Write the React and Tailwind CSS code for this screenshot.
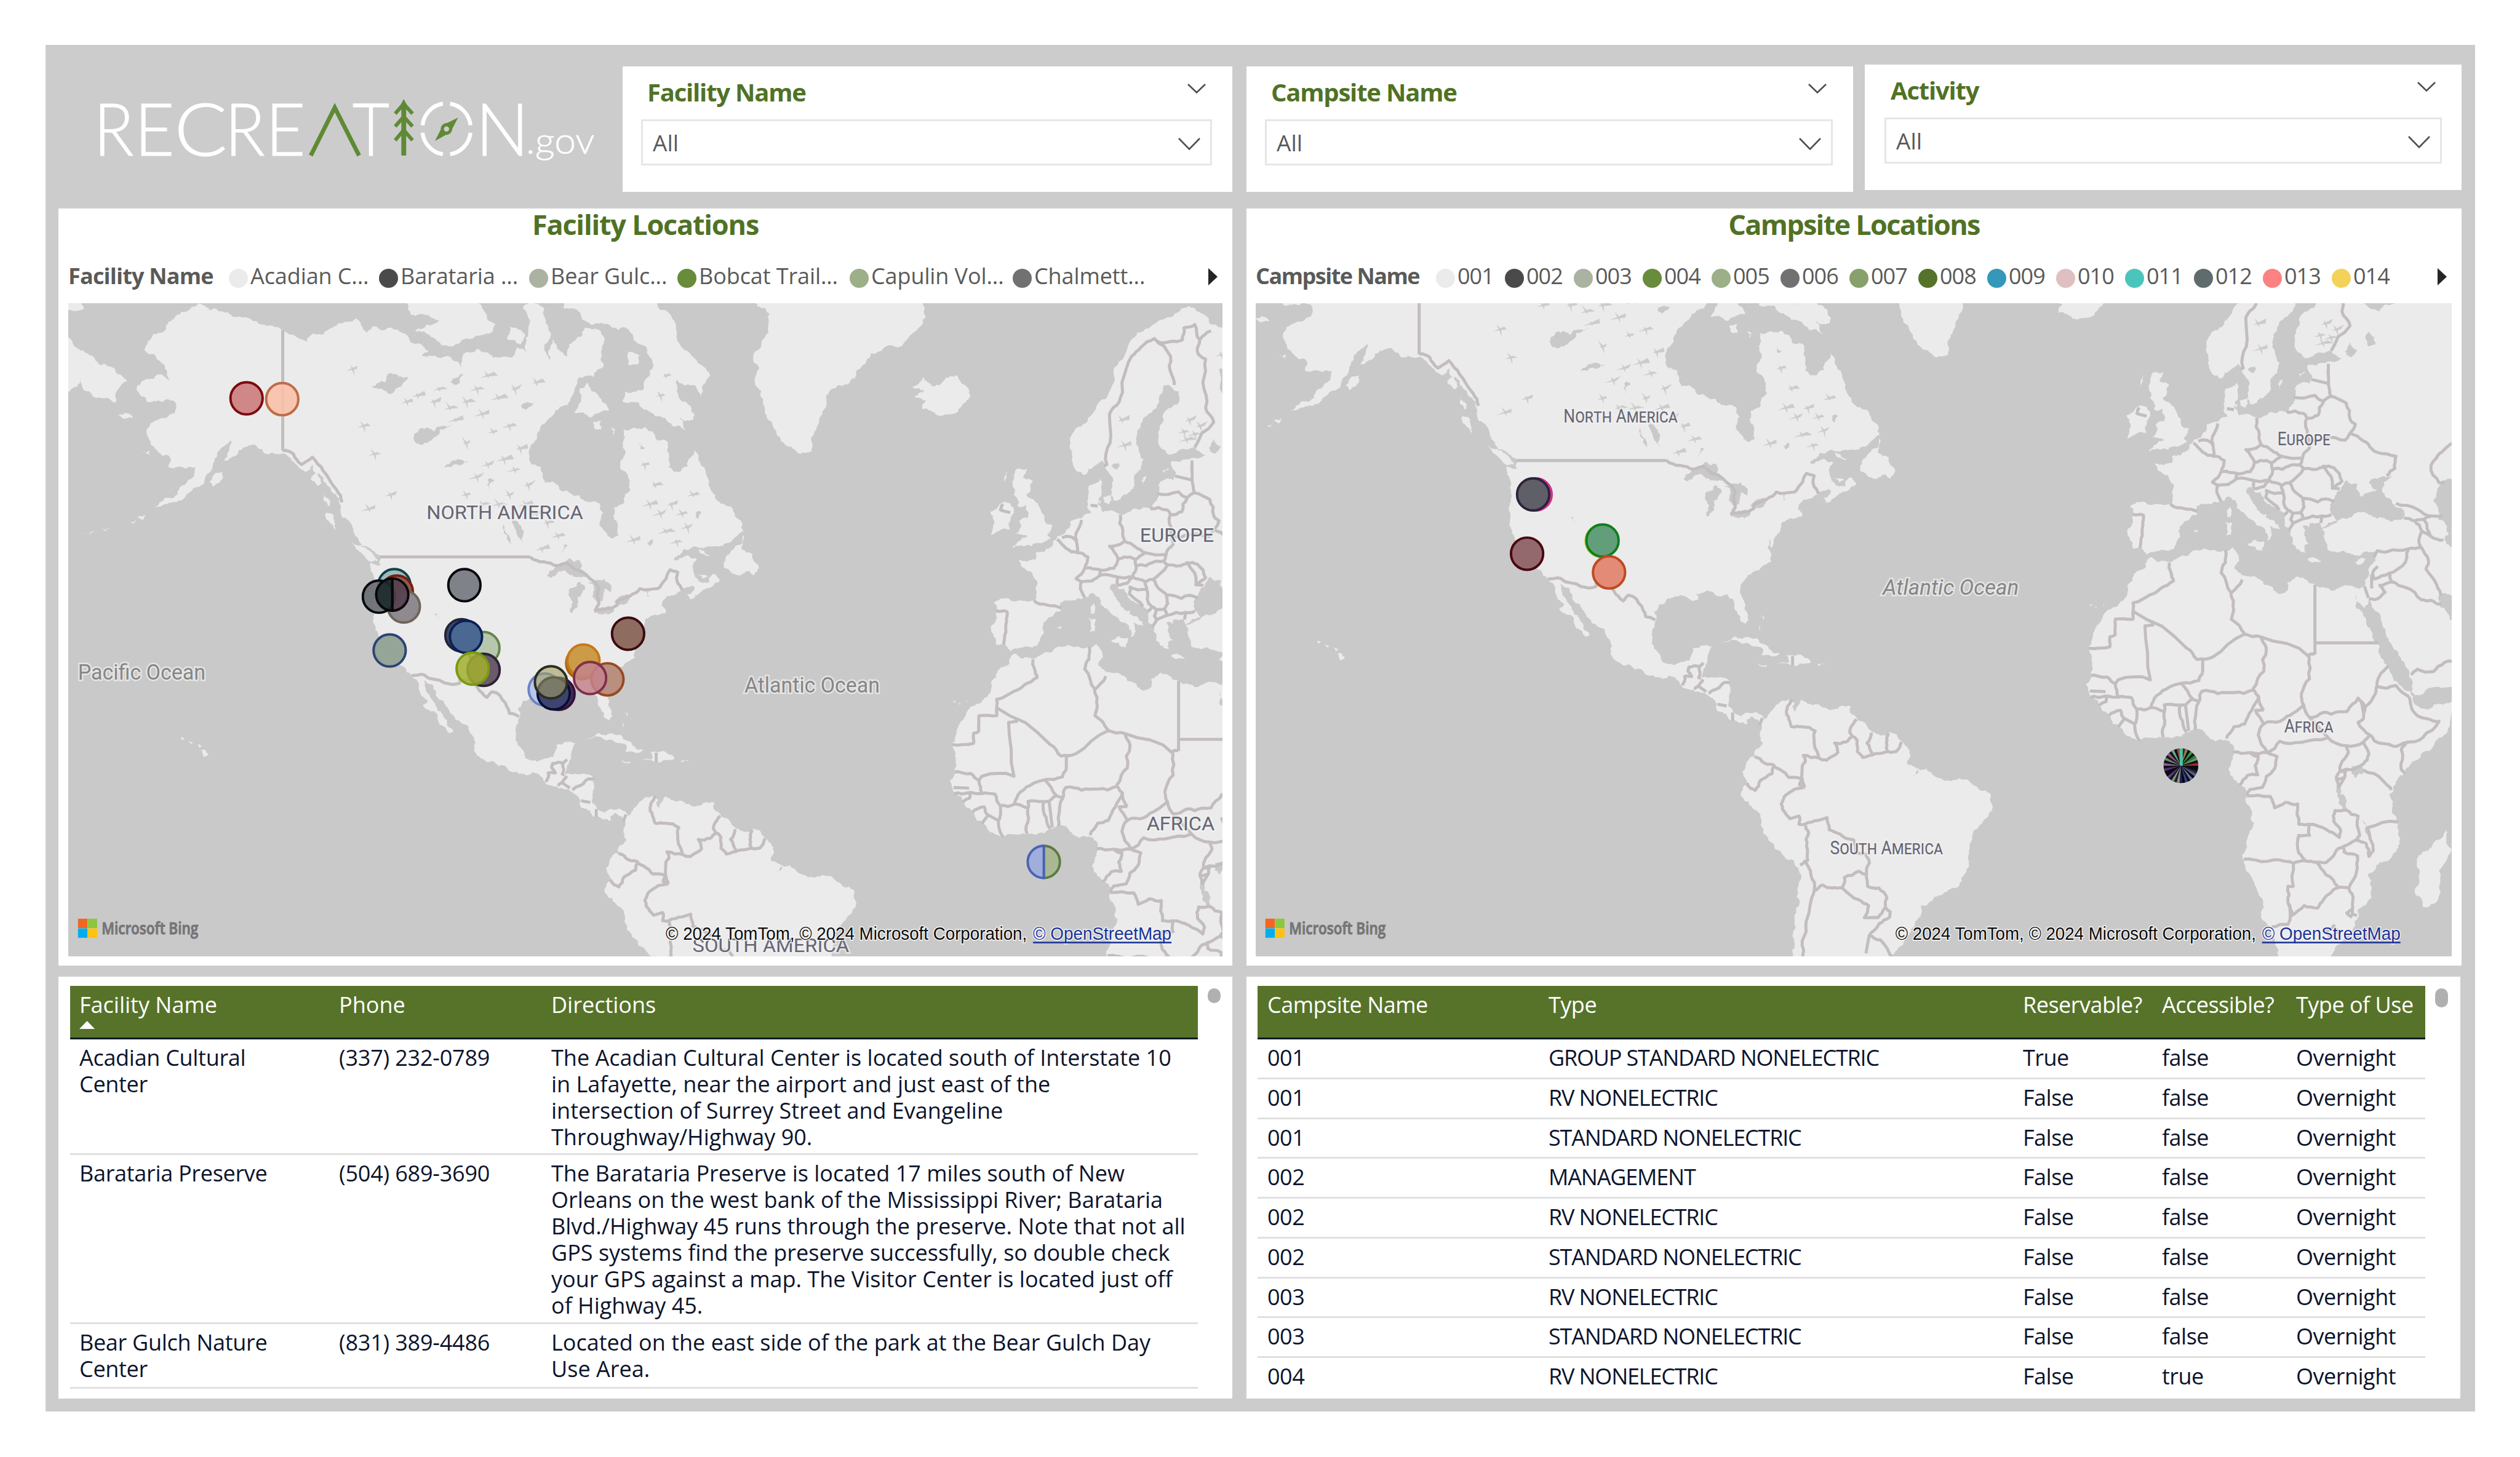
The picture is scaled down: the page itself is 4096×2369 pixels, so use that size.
import React from "react";

/* ---------- Web-Mercator helpers: 3200 units for the full 360 degrees ---------- */
const UNIT = 3200 / 360;
const project = ([lon, lat]) => [
  lon * UNIT,
  -Math.log(Math.tan(Math.PI / 4 + (lat * Math.PI) / 360)) * (180 / Math.PI) * UNIT,
];
const parse = (s) => s.trim().split(/\s+/).map((p) => p.split(",").map(Number));

/* Deterministic midpoint displacement gives the coasts a natural edge. */
const noise = (x, y) => {
  const n = Math.sin(x * 12.9898 + y * 78.233) * 43758.5453;
  return (n - Math.floor(n)) * 2 - 1;
};
const roughen = (pts, amount, depth) => {
  if (depth === 0) return pts;
  const out = [pts[0]];
  for (let i = 1; i < pts.length; i++) {
    const [ax, ay] = pts[i - 1];
    const [bx, by] = pts[i];
    const k = noise(ax + bx, ay + by) * amount;
    out.push([(ax + bx) / 2 - (by - ay) * k, (ay + by) / 2 + (bx - ax) * k], [bx, by]);
  }
  return roughen(out, amount, depth - 1);
};
const toPath = (s, closed, amount = 0.2, depth = 3) => {
  let pts = parse(s).map(project);
  if (closed) pts.push(pts[0]);
  pts = roughen(pts, amount, depth);
  return "M" + pts.map(([x, y]) => x.toFixed(1) + " " + y.toFixed(1)).join("L") + (closed ? "Z" : "");
};

const LAND = [
  // North America
  "-168,65.7 -166.5,66.2 -164,66.6 -161.8,66.1 -162.5,66.9 -164,67.6 -166.6,68.3 -166,68.9 -163.2,69.5 -161.5,70.3 -159,70.8 -156.6,71.3 -154.5,70.9 -152,70.8 -149,70.5 -145,70 -141,69.65 -138.5,69.2 -136.5,68.9 -135,69.4 -133,69.6 -130.5,70.1 -128.5,70.2 -127.5,70.4 -125.5,69.5 -124.3,69.9 -121.5,69.8 -117.5,69 -115,68.6 -114,68.2 -115.2,67.9 -112,67.8 -109.8,67.8 -108,67.1 -107.5,68.1 -105,68.4 -102,67.8 -98.5,67.8 -97.5,68.5 -95.9,68.2 -95.5,69.4 -96.5,71 -95,71.9 -92.5,71 -91.8,69.8 -90.3,68.7 -88.3,67.9 -88,68.7 -85.5,69.3 -85,69.8 -82.5,69.7 -81.3,69 -82,68.2 -81.5,67.3 -83.5,66.4 -86,66.4 -87,65.3 -88.5,64.2 -90.5,63.8 -92.5,62.7 -94.5,61 -94.8,59 -93.2,58.8 -92.4,57.2 -90,57 -87.5,56.1 -85,55.3 -82.3,55.1 -82.3,53 -81.3,52 -80,51.2 -78.8,51.6 -79,53 -79.6,54.6 -77.7,55.3 -76.6,56.5 -76.7,57.5 -78.5,58.8 -77.5,60 -77.8,61.3 -78.1,62.3 -75.5,62.3 -73.8,62.4 -71.8,61.3 -69.6,61 -69.5,59.5 -69.5,58.8 -67.5,58.3 -66,58.8 -65.2,59.8 -64.6,60.4 -63.8,59.3 -62.5,58 -61.8,56.6 -60.3,55.3 -58,54.8 -57.2,53.7 -55.8,52.9 -55.7,52 -57,51.4 -59.5,50.3 -62,50.3 -65,50.2 -66.7,49.9 -68.5,48.8 -70,47.5 -68.3,48.6 -66,49.2 -64.3,48.8 -65,48 -64.8,47 -64,46.2 -62,45.8 -61.2,46.9 -60,46 -61.5,45.2 -63.5,44.6 -65.5,43.5 -66.1,44.2 -64.7,45.2 -66,45.2 -67.2,44.7 -69,44.1 -70.3,43.6 -70.8,42.7 -70,41.8 -71.5,41.4 -73.8,40.9 -74,39.8 -75.1,38.8 -75.9,37.2 -76.1,39 -76.4,37.2 -75.8,36 -75.8,35.2 -77.5,34.4 -79,33.6 -80.8,32.2 -81.4,31 -81.3,29.8 -80.5,28.4 -80.1,26.8 -80.4,25.2 -81.3,25.6 -82,27 -82.7,28 -82.8,29.2 -84,30.1 -85.2,29.7 -86.5,30.4 -88.5,30.3 -89.6,30.2 -89.3,29.2 -91,29.3 -93,29.7 -94.7,29.4 -96.5,28.4 -97.4,27.3 -97.2,25.7 -97.8,24 -97.8,22.4 -97.2,20.8 -96.2,19.2 -94.8,18.3 -92.6,18.6 -91,18.9 -90.5,20 -90.3,21.1 -88,21.6 -86.8,21.4 -87.4,20 -87.7,18.5 -88.3,17.5 -88.8,15.9 -87.5,15.8 -85.8,15.9 -83.5,15.1 -83.3,13.8 -83.6,12.2 -83.7,11 -82.8,9.7 -81.5,8.9 -79.8,9.5 -78,9.3 -77,8.4 -76.8,7.5 -77.5,7.3 -78.3,8.3 -79.5,8.9 -80.3,8.2 -80.3,7.4 -81.6,7.7 -82.9,8.1 -83.7,8.6 -84.8,9.7 -85.8,10 -85.8,11.1 -87.3,12.6 -88.5,13.2 -91,13.8 -92.5,14.6 -94.5,16.2 -96,15.7 -98.5,16.3 -101,17.3 -103.5,18.3 -105.5,20 -105.3,21.5 -106,22.8 -108,24.8 -109.4,26 -110.8,27.6 -112.3,29 -113.2,31 -114.8,31.7 -114.5,30 -112.7,28 -111.3,26.2 -110.5,24.3 -109.5,23.2 -110.2,23 -112,24.6 -112.3,26 -114,27 -115,27.8 -114.1,28.5 -115.8,30.3 -117.1,32.5 -118.4,33.8 -120.6,34.5 -121.9,36.6 -122.5,37.8 -123.8,39.3 -124.3,40.4 -124.1,42 -124.4,43 -124,45 -124,46.3 -124.7,48.3 -122.8,48 -122.8,49 -124.5,49.8 -126.5,50.6 -127.7,51.8 -128.5,53 -130.3,54.5 -130.5,55.6 -132,56.3 -133.5,57.8 -135.5,59 -136.8,58.3 -139.5,59.6 -142,60 -144,60 -146,60.8 -148.3,60.6 -149.8,59.8 -151.8,59.3 -150.5,61.2 -152.5,60.5 -153.8,59.2 -155,58.1 -157,56.8 -159,55.8 -161.5,55.2 -163.5,54.8 -164.9,54.6 -162.5,55.7 -160.5,56 -158,57.6 -157.2,58.7 -159,58.6 -162,58.7 -162,59.8 -164.5,60.4 -166,61.6 -164.8,62.9 -161,63.6 -161,64.5 -163.5,64.5 -166.3,64.6",
  // Siberian tip, Alaskan and Canadian islands
  "-183,69.5 -180,68.9 -178,68.3 -175,67.3 -172,66.9 -169.8,66.1 -172,64.4 -175.5,64.8 -178,65.5 -178.5,66.3 -180.5,65.3 -183,65",
  "-182,71.5 -178.5,71.4 -177.8,71 -182,70.9",
  "-171.7,63.5 -170,63.6 -168.8,63.2 -170.5,63.1",
  "-167,60.2 -165.7,60.3 -165.7,59.9",
  "-154.6,57.3 -153,58.2 -152.1,58.3 -152.5,57.4 -154,56.8",
  "-168,53.6 -166.3,54 -167,53.3",
  "-169.2,53 -168,53.4 -168.6,52.9",
  "-174.6,52.2 -173.2,52.4 -173.8,52",
  "-177.9,51.8 -176,52 -176.8,51.7",
  "-128.2,50.8 -126.5,50.4 -125,49.8 -123.4,48.5 -125.5,48.8 -127.3,49.9",
  "-133,54.1 -131.7,53.9 -131.2,52.2 -132.3,53",
  "-134.5,58.2 -133.8,57.2 -134.4,56.9 -135.8,57.6",
  "-133.4,56.3 -132.2,55.4 -132.4,54.8 -133.4,55.4",
  "-125,72.2 -123,71.3 -120.5,71.6 -118,72.5 -118,74 -125,74",
  "-118,71.4 -117.2,70.6 -114,70.6 -112,70.3 -116.5,69.6 -113.5,69.2 -109,68.7 -105.5,69.2 -102,69.6 -101.5,70 -104,71 -104.8,72.5 -107,73.3 -114,73",
  "-99,69.9 -96,69.3 -97,68.7 -99.3,69",
  "-102,73 -99,71.6 -97,72 -98,73.5",
  "-90,73 -89,71 -87,71 -85.5,70.3 -84,70 -80,69.8 -77.5,69.8 -76,69 -73.5,68.4 -72.5,67.5 -73,66.5 -74.3,65.4 -77.5,65.3 -78,64.5 -75,64.4 -72,63.3 -68.8,62.5 -66.3,62.1 -67.5,63.2 -65,63 -64.7,63.5 -67,64.5 -68,66.2 -65,65.8 -63.5,64.9 -61.8,66.5 -63.5,67.3 -67,68.5 -68,69.5 -71,70.9 -75,72 -78,72.8 -81,73.7",
  "-87,63.6 -84,63.2 -80.5,63.8 -82.5,65 -84.5,66 -86,65.5",
  "-83.5,62.8 -82,62.9 -82,62.2 -83.3,62.3",
  "-77,68.2 -75,68 -75.2,67.3 -77,67.3",
  "-80.2,62.4 -79.4,62.2 -79.8,61.7",
  "-59.3,47.7 -57.8,49.8 -55.6,51.6 -56,50 -54,49.4 -52.8,47.6 -53.7,46.7 -54.5,47.3 -55.8,46.9",
  "-64.4,49.9 -61.8,49.1 -63.5,49.4",
  "-64,46.9 -62.2,46.5 -63.2,46.2",
  // Greenland, Iceland
  "-55,73.5 -54,71.5 -51.5,71 -51,69.5 -53.8,68 -53.5,66 -52,64.5 -51,63 -49.5,61.8 -48,60.9 -45,60 -43,60.2 -42.5,62 -41,63.5 -40.3,65 -38,65.8 -35,66.3 -32,68.1 -27,68.5 -22.5,70 -22,71 -24,72 -22,75",
  "-24.3,65.6 -22.3,66.4 -20.5,65.7 -18.5,66.1 -16,66.5 -14.5,65.8 -13.6,65 -15,64.3 -18.7,63.4 -21,63.8 -22.6,63.9 -21.8,64.6 -24,64.9 -22,65.4",
  // Caribbean, Hawaii
  "-84.9,21.9 -82.5,23.1 -80,23 -77,21.7 -74.2,20.2 -77.6,19.9 -77.2,20.7 -78.5,21.4 -81.8,22.2",
  "-74.4,18.4 -72.5,18.6 -73,19.9 -70,19.8 -68.4,18.6 -71,18 -72.3,18.2",
  "-78.3,18.4 -76.3,18.1 -77.5,17.8",
  "-67.2,18.4 -65.7,18.3 -67,18",
  "-78.3,25.2 -77.8,24.5 -77.9,23.9",
  "-77.8,26.7 -77,26.3 -77.2,25.9",
  "-61.9,10.7 -61,10.7 -61.2,10.1",
  "-156.1,20.2 -154.8,19.5 -155.7,18.9",
  "-156.8,21.1 -156,20.9 -156.4,20.5",
  "-158.4,21.7 -157.6,21.4 -158,21.2",
  "-159.9,22.3 -159.2,22.2 -159.5,21.8",
  // South America
  "-77.3,8 -76.8,8.5 -75.6,10 -74.8,11 -72.2,12 -71.4,11.2 -71.8,10.6 -71.4,9.7 -71,10.6 -70,11.9 -68.3,11 -66,10.5 -64,10.2 -62,10.7 -60.8,9.2 -58.5,7.8 -57,6 -54,5.9 -51.6,4.3 -50,1.8 -50.5,0 -48.5,-0.8 -47,-0.7 -44.3,-2.6 -41.5,-2.9 -39,-3.1 -37,-4.8 -35.3,-5.3 -34.8,-7.5 -35.5,-9.5 -37.2,-11.3 -38.5,-13 -39,-15 -39.1,-17.8 -40,-20 -41,-22 -43.2,-23 -45.5,-23.8 -48,-25.3 -48.6,-27.5 -49.8,-29.5 -51.5,-31.8 -53.5,-34 -57,-35 -57,-38 -74,-38 -73.3,-37 -72,-34 -71.5,-31 -71.4,-28 -70.5,-25 -70.2,-20 -71.5,-17.5 -75,-15.5 -76.3,-13.8 -77.5,-11.5 -79,-8.3 -80,-6.8 -81.2,-6 -81,-4.2 -80.2,-3.3 -80.9,-2 -80.5,-0.5 -79.9,0.9 -78.8,1.6 -77.3,3.8 -77.5,6.6",
  // Europe, Africa, Middle East
  "62,68.5 55,68.5 50,68 46,68 44,68.5 43.5,66.5 40,64.7 37,64 35,64.3 32.5,67 35,66.5 41,66.5 41,67.5 36,69 31,70 28,71 25.5,71 22,70.3 18.5,69.6 15.5,68.4 13,66.5 11.5,64.7 9,63.5 6,62.3 5,61 5.2,59.5 6,58.4 7.5,58 9.5,58.9 10.7,59.4 11.3,58.8 12.5,56.5 12.9,55.5 14.2,55.5 16,56.3 16.7,57.8 18.5,59.5 17.3,60.8 17.3,62 19,63.3 21.5,65 22.3,65.8 25,65.3 25.2,64.8 22,63.3 21.3,61.5 21.8,60.5 24,60 28,60.6 30,59.9 27,59.5 23.5,59.2 24.5,58.3 24.3,57.3 22.6,57.6 21.2,57 21,55.4 19.8,54.5 18.5,54.7 16.5,54.5 14,54 12,54.3 10.9,54.2 10,55 10.8,56.3 10.5,57.6 8.5,57 8.2,55.5 8.8,54 7,53.5 5,53.2 3.8,51.7 1.7,50.9 1.5,50.2 0,49.6 -1.4,49.6 -1.5,48.7 -4.6,48.6 -4.3,47.9 -2.3,47.2 -1.2,46 -1.3,44.5 -1.7,43.4 -4,43.4 -8,43.7 -9.2,43 -8.7,41 -9.4,38.8 -8.8,37.1 -7,37.1 -6.1,36.2 -4.5,36.7 -2,36.8 -0.7,37.7 0.1,38.8 -0.3,39.6 0.8,41 3.2,42 3,43.2 5,43.4 7.5,43.8 8.8,44.4 10.2,43.9 10.6,42.9 12.3,41.8 14,40.8 15.7,40 16,38 16.5,38.4 17.1,39.1 16.7,40.4 18.4,39.9 18.3,40.5 16,41.5 16,42 14.3,42.6 13.4,43.8 12.3,44.9 12.5,45.5 13.7,45.7 13.8,45 15,45 16,43.6 18.5,42.5 19.5,41.8 19.4,40.4 20.8,38.8 21.5,37.2 22.5,36.6 23.2,36.5 23,37.6 24,37.9 23,39.2 22.8,40.4 24,40.2 24,40.8 26,40.8 26.2,40.1 27.5,40.9 29,41.1 28,42 27.8,43.2 28.7,44.4 29.7,45.2 31,46.5 33,46.1 32.6,45.4 33.6,44.4 35.3,45 36.5,45.3 35,46.2 37.5,47 39.2,47.2 37.8,46.3 37.5,45 39,44.1 41.5,42.5 41.5,41.5 39,41 36.5,41.4 35,42 32,41.8 29.3,41.2 29,40.8 26.3,39.9 26.8,38.6 27.3,37 28.5,36.7 30.5,36.7 32.5,36.1 34.5,36.7 36,36.7 35.8,35 35,33 34.2,31.3 32.5,31.1 31,31.5 29,30.9 25,31.6 23,32.6 21.7,32.9 20,32 20,30.8 18,30.3 15.5,31.6 15,32.4 11.5,33.1 10.1,34 11,35.2 10.3,36.8 9.8,37.3 6,36.9 3,36.9 0,35.9 -2,35.1 -5.4,35.9 -6.3,34.5 -8.5,33.3 -9.8,31.4 -9.8,29.8 -11.5,28.2 -13,27.6 -14.5,26 -16,23.8 -17,21.3 -16.3,19.5 -16.5,16.5 -17.4,14.7 -16.7,12.5 -15,11 -13.2,9 -12.5,7.5 -10.5,6 -8,4.5 -6,5 -3,5.1 -1.5,4.9 1.2,6 4.3,6.3 5.5,4.8 6.5,4.3 8.5,4.6 9.6,3.8 9.8,1.5 9.4,-0.3 9,-1 11.5,-4 12.3,-6 13.3,-8.5 13.7,-10.8 12.6,-13 12.2,-15.5 11.8,-17.5 13.5,-21 14.5,-23 15,-26.5 16.5,-28.7 17.5,-30.5 18.3,-32.5 18.4,-34 20,-34.8 24,-34 27,-33.6 30,-31.2 32.5,-28.5 32.9,-26 35.5,-24 35.4,-22 34.8,-20 37,-17.8 40,-16 40.7,-14.5 40.4,-11 39.3,-8.5 39.5,-6.8 38.8,-5.5 39.8,-3.8 41.5,-1.8 43.5,0.7 46,2.5 48.5,5 50,8 51.2,10.5 51,11.8 48,11.2 44.5,10.4 43.2,11.5 43.2,12.5 41.5,13.8 39.6,15.3 38.5,18 37.2,19.5 37,21.2 35.6,23.8 34,26.5 32.6,29.5 32.5,30 33.5,28.5 34.2,27.8 34.9,29.4 35.5,28 37.5,25 39,22 41,19 42.5,17 43,14.5 43.5,12.7 45,12.9 48.5,14 52.3,15.6 55,17.5 62,20",
  "-5.7,50.1 -3.5,50.3 -1,50.7 1.3,51.2 0.7,51.6 1.7,52.7 0.2,53.2 -0.5,54.3 -1.6,55.3 -3.2,56 -2,57.4 -3.8,57.7 -3.1,58.6 -5,58.6 -5.8,57.3 -5.6,56 -4.8,54.8 -3.3,54.9 -3,53.5 -4.5,53.2 -4.3,52.4 -5.2,51.8 -3,51.4 -4.8,50.8",
  "-9.8,51.6 -6.3,52.2 -6,53.7 -5.6,54.6 -7.2,55.3 -8.6,54.6 -9.9,54.2 -9.2,53.2",
  "-7,58.2 -6.3,58.3 -7.3,57.3",
  "12.5,37.9 15.6,38.2 15.2,36.7",
  "8.3,41 9.7,40.8 9.5,39.2 8.5,39",
  "8.7,42.6 9.4,43 9.4,41.6 8.9,41.6",
  "23.6,35.5 26.2,35.2 24.5,35",
  "32.4,35 34.4,35.6 33,34.7",
  "11,55.7 12.5,56 12.2,55 11.2,55.2",
  "9.8,55.5 10.7,55.4 10.4,55",
  "18.2,57.5 19,57.9 18.4,57",
  "22,58.5 23.2,58.6 22.3,58.1",
  "2.5,39.6 3.3,39.9 3.1,39.4",
  "-16.8,28.4 -16.2,28.5 -16.6,28.1",
  "-15.8,28.1 -15.4,28.1 -15.6,27.8",
  "-14.2,28.5 -13.9,28.5 -14.2,28.2",
  "49.3,-12 50.4,-15.5 49.6,-17 48,-22 47,-25 45,-25.5 43.5,-23 44.3,-20 44.3,-16.5 46,-15.8 48,-13.8",
];

const WATER = [
  "-92,46.7 -89.5,48 -88,48.8 -86,48.6 -84.7,46.5 -87,46.5 -88.5,47.2 -90.5,46.6",
  "-87.8,42.3 -87.5,41.7 -86.4,42.5 -86.4,43.9 -85.1,45.4 -86,45.9 -87.8,45 -87.6,43.7",
  "-84.5,45.9 -83.4,45.2 -83.5,44.2 -82.5,43.2 -81.7,43.5 -81.4,45 -80.2,44.5 -80.5,45.7 -82.5,46.1",
  "-83.3,41.8 -81.5,41.6 -79,42.7 -80.5,42.7 -82.5,42.3",
  "-79.7,43.3 -77,43.4 -76.3,44.1 -78.5,44",
  "-98.5,53.6 -97.2,52.8 -96.5,50.5 -97.5,51.5",
  "-100.2,52.8 -99.3,51.5 -98.7,50.6 -99.6,51.8",
  "-116.5,61.1 -113.5,61.2 -109.5,62.7 -113,62 -115.5,62.3",
  "-124.5,65.8 -121,65.1 -119,65.7 -117.8,66.4 -121,66.7 -122,66",
  "-111,58.7 -106.5,59.3 -109.5,59.4",
  "-102.8,56.4 -101.8,57.5 -102.9,57.6",
  "-89.3,49.4 -88.2,50.4 -88.9,50.5",
  "-112.9,41.6 -112.2,41.2 -112.3,40.8",
  "-73.5,50.7 -72.6,51.1 -73,50.3",
  "-75,61 -73.8,60.6 -74.6,60.4",
  "-64.5,54 -63.3,54.2 -64,53.4",
  "30.8,60.2 31.3,61.5 32.8,60.6 31.8,60",
  "35,61 35,62.3 36.2,61.2",
  "12.6,58.8 13.8,59.2 13.6,58.5",
  "27.2,58.8 27.8,58 27.3,58.2",
  "31.8,-0.3 33.8,0.3 34,-1.5 32.5,-2.5 31.7,-1.6",
  "29.3,-3.5 29.7,-5.5 31,-8.6 30.4,-8.4 29.2,-6",
  "34,-10 34.9,-12 35,-14 34.3,-12.5",
  "47,44 49,46.5 53,47 55,45 52,42 54,39 53,37 50,37.4 49,38.5 49.5,40.3 47.8,42.8",
  "48,30 50,30 52,27.8 56,27 56,25 51.5,24.5 50,26.5",
  "-92.5,68.5 -90.8,69.2 -91.5,67.6",
  "-110,66 -107.5,66.6 -108.5,65.9",
  "-96.8,64.2 -94.5,64.4 -96,63.8",
  "-49.5,-2 -48.4,-1 -49,-1.8",
  "-73.2,45 -73.1,44 -73.5,44",
];

const BORDERS = [
  "-141,69.65 -141,60.3",
  "-141,60.3 -139,60 -137.5,59 -135.5,59.7 -133.5,58.4 -131,56.5 -130,55.2",
  "-123,49 -95.2,49",
  "-95.2,49 -94.6,48.7 -92,48.3 -89.6,48 -88.4,48.3 -84.8,46.8 -83.5,46 -82.4,45 -82.4,43 -83.1,42.1 -81,42.3 -79,42.8 -79,43.4 -76.5,44.1 -74.8,45 -71.5,45 -70.3,46 -69.2,47.4 -67.8,47.1 -67.8,45.7 -67,44.8",
  "-117.1,32.5 -114.8,32.6 -111,31.3 -108.2,31.3 -108.2,31.8 -106.5,31.8 -104.9,30.6 -103.2,29 -102.3,29.9 -101.3,29.7 -99.5,27.5 -99,26.4 -97.2,25.9",
  "-92.2,14.5 -91.8,16.1 -90.5,16.1 -91.2,17.2 -91,17.8 -89.1,17.8 -89.2,15.9 -88.8,15.8",
  "-89.1,17.8 -88.3,18.5", "-90,13.8 -89.3,14.4 -88.4,15.6", "-89.3,14.4 -87.8,13.4",
  "-87.3,13 -86,13.8 -84.8,14.8 -83.3,15", "-85.7,11.1 -84,10.8", "-82.9,9.6 -82.9,8.1", "-77.4,8.6 -77.9,7.3",
  "-71.8,19.7 -71.8,18",
  "-71.9,12 -72.8,10.5 -72.9,9.2 -72.4,8.2 -72,7 -70,7 -67.6,6.2 -67.8,4 -67.3,2.5 -66.9,1.2",
  "-66.9,1.2 -65.5,0.8 -63.4,2.2 -64,4 -61.8,4.2 -60.7,5.2",
  "-59.9,8.3 -60.7,7.3 -61.2,6 -60.7,5.2 -59.8,4.5 -59.8,2.4 -58.8,1.3 -56.5,2 -54.6,2.3 -52.6,2.4 -51.6,4.2",
  "-57.2,5.9 -58,4 -57,2", "-54,5.8 -54.4,4 -54.2,2.2",
  "-66.9,1.2 -69.8,1.7 -69.4,0.6 -70,-0.2 -69.5,-4.2",
  "-69.5,-4.2 -70.5,-3.8 -70.1,-2.7 -72.5,-2.4 -74,-1 -75.3,-0.1 -77.5,0.6 -78.8,1.5",
  "-75.3,-0.1 -75.6,-1.7 -77.8,-3 -78.7,-4.8 -79.6,-4.4 -80.3,-3.5",
  "-69.5,-4.2 -71.5,-4.6 -73,-5.6 -73.9,-7.3 -73,-9.2 -72.3,-10 -70.6,-9.5 -70.6,-11 -69.5,-11",
  "-69.5,-11 -68.8,-12.5 -69.2,-15 -69,-17.5 -69.5,-17.6 -70.4,-18.3",
  "-69.5,-11 -67,-10.3 -65.4,-9.8 -65,-12 -63,-12.8 -60.5,-13.8 -60,-16.2 -58.3,-16.4 -57.6,-18 -58.1,-19.9",
  "-69.5,-17.6 -68.4,-20 -67.8,-22.8 -68.5,-25 -69.3,-28 -70,-31 -69.8,-34",
  "-67.8,-22.8 -66.3,-21.8 -64.5,-22.3 -62.6,-22.3 -62.2,-20.5 -59.5,-19.4 -58.1,-19.9 -57.9,-22 -55.8,-22.3 -54.3,-24 -54.6,-25.6 -53.7,-26.3 -53.8,-27.2 -55.8,-28.3 -57.6,-30.2 -55.5,-30.9 -53.4,-33.7",
  "-62.6,-22.3 -59.5,-24.3 -57.7,-25.3 -58.5,-27.3 -56,-27.3 -54.6,-25.6", "-57.6,-30.2 -58.2,-33",
  // Europe
  "31,69.6 28.9,69 28.5,68.2 30,67.7 29.5,66 30,64 31.5,62.8 28,60.6",
  "28.9,69 28,70 26,69.8 25.7,69 22,68.8 20.5,69.1 18,68.5 16.3,67.9 14.5,66 14,64.5 12.2,63.5 12.3,61 11.7,59 11.2,58.9",
  "20.5,69.1 23.5,67.9 23.8,66.5 24.2,65.8",
  "27.5,59.4 27.5,57.5 28,56.2 26.6,55.7 25,56.3 21,56.1", "24.3,57.9 27.4,57.5",
  "28,56.2 30.8,55.5 31.5,53.8 32.5,53.2 31.5,52.2 34,51.3 35.5,50.4 38,49.8 40,49.5 39.8,48 38.3,47.1",
  "26.6,55.7 25.6,54.2 23.5,53.9 22.8,54.4 19.8,54.5", "23.5,53.9 23.6,52 23.7,51.5 27,51.6 30.6,51.4 31.5,52.2",
  "23.7,51.5 24,50.5 22.7,49.3 22.2,48.5", "14.2,53.9 14.7,52 15,50.9 13,50.3 12.2,50.3 13.8,48.7 15,49 17,48.7 18.8,49.5 22.7,49.3",
  "15,50.9 17,50.2 18.8,49.5", "17,48.7 17.1,48 19,47.9 20.5,48.4 22.2,48.5 22.9,48 20.3,46.2 18.8,45.9 16.5,46.5 17.1,48",
  "22.9,48 25,47.9 26.6,48.3 28.2,46.5 28.2,45.5 29.6,45.4", "26.6,48.3 28.5,48.1 30,46.4 28.5,45.6",
  "20.3,46.2 21.5,44.9 22.7,44.2 25.5,43.7 27,44.1 28.6,43.8", "22.7,44.2 23,43 22.4,42.3 22.9,41.4 26.3,41.8 28,42",
  "22.4,42.3 20.8,42.2 20.5,41.3 21,40.8 22.9,41.4", "21,40.8 20.1,39.7", "19.4,41.9 20,42.6 20.8,42.2", "26.3,41.8 26.1,40.8",
  "20,42.6 19.2,43.5 19.1,44.9 18.8,45.9", "19.1,44.9 16,45.2 15.9,44.3 18.4,42.6", "13.6,45.5 15.5,45.7 16.5,46.5 13.7,46.5 13.6,45.6",
  "13.8,48.7 13,47.6 10.4,47.4 9.6,47.5 7.6,47.6 8.2,49 6.2,49.5 4.2,50 2.5,51.1", "10.4,47.4 10.4,46.7 13.7,46.5", "7.6,47.6 6,46.3 7,45.9 9,46 10.4,46.7",
  "7,45.9 6.8,45 7.6,43.8", "6.2,49.5 6.1,50.8 6,51.8 7,53.3", "6.1,50.8 5,51.4 3.4,51.3", "8.7,54.9 10,54.8", "-1.8,43.4 0.7,42.8 3.2,42.4",
  "-8.8,42 -6.8,41.9 -6.9,41 -7,39 -7.4,37.2", "-7.5,55 -8,54.4 -6.2,54.1",
  // Caucasus, Middle East
  "40,43.5 44,42.7 46.5,41.8 48.6,41.8", "41.5,41.5 43.5,41.1 45.2,41.3 46.5,41.8", "43.5,41.1 44.8,39.7 44.3,37.9 44.8,37.2 42.4,37.1 38.5,36.7 36.6,36.8 36,35.9",
  "44.8,39.7 46.5,38.9 48.8,38.4", "45.2,41.3 45.8,40 46.5,38.9", "44.8,37.2 46,35.5 45.6,34 47.8,31 48.5,29.9", "42.4,37.1 41.2,34.5 38.8,33.4 36,32.5 35.7,33.4 36.6,34.5",
  "38.8,33.4 39.2,32.1 37,31.5 38,30.4 36,29.2 35,29.4", "39.2,32.1 42,31.1 44.7,29.2 46.6,29.1 48.4,28.5", "34.2,31.3 34.9,29.5", "35.5,33.2 35.5,31", "42.8,16.4 44,17.4 47,17 49,18.6 52,19", "47,49 46.5,48.4 48,46.2 49,46.3", "47,49 48.5,50 52,51.5",
  // Africa
  "-8.7,27.7 -8.7,28.7 -5.5,30 -3.6,31 -1.2,32.2 -1.7,33.5 -2,35", "-8.7,27.3 -8.7,26 -12,26 -12,23.4 -13,23 -13,21.3 -17,21.1",
  "-8.7,27.7 -8.7,27.3 1.2,21.1 3.2,19.1 6,19.5 12,23.5 15,23 24,19.5", "-4.8,25 -6.5,24.9 -5.5,15.5 -11.5,15.5 -12,14.8",
  "12,23.5 9.5,26 9.9,29 9.5,30.3 11.5,32.4", "9.5,30.3 7.6,33.5 8.4,35 8.4,36.9", "25,31.6 25,20", "25,22 36.8,22", "24,19.5 24,15.7 22.5,13 22.9,11 24,8.7",
  "25,20 24,20 24,19.5", "15,23 16,21 15.5,17 13.6,14 13.6,13.7 14.6,12.5 15.5,10", "4.2,16.8 4.2,19", "4.2,16.8 3.5,15.4 0.2,14.9 2.4,12 3.6,11.7",
  "3.6,11.7 4.1,13.5 7,13 10,13.2 13.6,13.7", "3.6,11.7 2.7,8 2.7,6.4", "1,11 1.6,6.2", "0,11 0.5,8 1.2,6", "0,11 -2.9,11 -2.8,8 -3.1,5.1",
  "0.2,14.9 -2,14.2 -4.3,12.7 -5.4,10.5 -2.9,9.8", "0,11 1,11 2.4,12", "-5.4,10.5 -8,10.2 -8,8.5 -8.4,7.5 -7.5,4.4", "-8,10.2 -9,12.3 -11.4,12.4 -12,14.8",
  "-12,14.8 -13.5,16 -16.5,16.3", "-16.7,13.5 -13.8,13.4", "-16.6,12.4 -13.7,12.6 -11.4,12.4", "-13.7,12.6 -13.7,11.6 -15,10.9", "-13.2,9 -11,10 -10.3,8.5 -11.4,6.9", "-10.3,8.5 -8.4,7.5",
  "8.6,4.8 10,7 12,7.5 13.3,10 14.6,12.5", "15.5,10 14,10 15.5,7.5 14.5,5.5 16.2,2.2 13,2.2 9.8,2.3", "15.5,7.5 18.6,8 21,9.5 22.9,11", "16.2,2.2 18.5,4.3 22.5,4.1 27.4,5 30.8,3.5",
  "24,8.7 27.4,5", "24,8.7 26.5,9.6 28,9.3 31,9.8 33,12.2 34,9.5", "33,12.2 34.3,10.6 34,8.5 33,7.8 35.3,5.4 34,4.2 30.8,3.5", "34.3,10.6 36.2,13 36.5,15 38.6,18", "36.5,14.3 40,14.5 42.4,12.5",
  "42.4,12.5 42.8,10.9 44,9 47,8 48,8 45,5 42,4.1 39.5,3.4 36,4.4 35.3,5.4", "42,4.1 41,2.8 41,-0.9 41.6,-1.7", "34,4.2 35,1.9 34,0.1 29.6,-1.3", "33.9,-1 37.6,-3 39.2,-4.7", "30.8,3.5 31.2,2.2 29.8,0 29.6,-1.3 29,-2.8 29.3,-4.4", "29.6,-1.3 30.8,-1.1 30.5,-2.4 29,-2.8", "30.5,-2.4 29.3,-4.4",
  "13,2.2 14.5,1.5 13.9,-0.2 14.4,-1.9 12.5,-2 11,-3.8", "16.2,2.2 18,1.5 17.5,-0.8 16,-2.2 15.3,-4.2 13,-4.6 12.3,-5.8", "12.3,-5.8 16.7,-5.9 17.5,-8 19.5,-7 21.8,-7.3 22,-11 24,-11 24,-13 22,-13 22,-16.2 23.3,-17.6",
  "11.8,-17.3 14,-17.4 18.5,-17.4 21,-18 23.3,-17.6 25.2,-17.8", "24,-11 27,-11.9 29.5,-13.4 29.8,-12.2 28.5,-10.5 28.7,-8.5 30.8,-8.4", "30.8,-8.4 33,-9.5 33.3,-13 32.7,-13.8 30.2,-15", "32.7,-13.8 34.5,-14.5 35,-16.8 35.8,-15.8 34.8,-11.6 40.4,-10.6",
  "25.2,-17.8 27,-17.9 28.8,-16 30.2,-15", "30.2,-15 30.4,-16 32.9,-16.7 32.7,-19.5 31.3,-22.3 29.4,-22.2 27,-20 25.2,-17.8", "31.3,-22.3 32,-24.5 31.9,-26.8 32.8,-26.9", "29.4,-22.2 26.5,-24.4 25.5,-25.7 23,-25.3 20.8,-26.9 20,-24.8 20,-22 21,-22 21,-18.2", "20,-24.8 20,-28.4 17,-28.8", "27,-29.6 28.5,-28.6 29.4,-29.5 28,-30.6 27,-29.6", "32,-25.8 30.9,-26.5 31.9,-27.2",
];

const LAND_D = LAND.map((s) => toPath(s, true)).join("");
const WATER_D = WATER.map((s) => toPath(s, true, 0.25, 3)).join("");
const BORDER_D = BORDERS.map((s) => {
  const straight = s.split(" ").length === 2;
  return toPath(s, false, straight ? 0 : 0.12, straight ? 1 : 2);
}).join("");

/* Small lakes scattered over the Canadian Shield and northern Europe. */
const LAKES = parse(
  "-128,67 -126,62.5 -124,60 -118,64.5 -116,65 -113,64.5 -112,65.5 -110,64 -109,63 -107,64.5 -105,65.5 -104,63.5 -102,62 -101,64.8 -99,62.5 -98,65.5 -97,60.5 -100,59.5 -103,59 -105,57.8 -107,56 -104,55 -101,55 -99,56 -96,55 -94,54 -92,53 -93,50 -90,51.5 -98,58.5 -95.5,57 -121,56 -125,54.5 -73,55 -71,54 -69,55 -67,54 -66,52.5 -72,57 -70,52 -76,51 -74,59 -65,56 -68,50.8 26,62 27,63 28,61.8 26.5,61.3 29,62.5 15,60.8 14.5,63 33,68 -111,68.2 -103,66.5 -94,66 -70,66.5 -71,65 -107,61"
).map((p) => [project(p), p]);

const lakePath = ([[cx, cy], [a, b]]) => {
  const arms = 9;
  let d = "";
  for (let i = 0; i < arms; i++) {
    const ang = (i / arms) * 2 * Math.PI;
    const r = i % 2 ? 2 : 4 + Math.abs(noise(a + i, b - i)) * 9;
    d += (i ? "L" : "M") + (cx + r * 1.3 * Math.cos(ang)).toFixed(1) + " " + (cy + r * Math.sin(ang)).toFixed(1);
  }
  return d + "Z";
};
const LAKES_D = LAKES.map(lakePath).join("");

function WorldLayer({ x, y }) {
  return (
    <g transform={`translate(${x} ${y})`}>
      <path d={LAND_D} fill="#ebebeb" />
      <path d={WATER_D} fill="#c9c9c9" />
      <path d={LAKES_D} fill="#cccccc" />
      <path d={BORDER_D} fill="none" stroke="#c3bdbe" strokeWidth="5" strokeLinejoin="round" />
    </g>
  );
}

function MapLabel({ x, y, w, size, color = "#666675", className = "", children }) {
  return (
    <text
      x={x}
      y={y}
      textLength={w}
      lengthAdjust="spacingAndGlyphs"
      fontSize={size}
      fill={color}
      stroke="#f1f1f1"
      strokeOpacity="0.7"
      strokeWidth="5"
      paintOrder="stroke"
      className={"font-['Roboto',sans-serif] " + className}
    >
      {children}
    </text>
  );
}

function MapFooter({ logoX, copyX, copyW }) {
  return (
    <g>
      <rect x={logoX} y="1513" width="15.5" height="15.5" fill="#f26522" />
      <rect x={logoX + 16} y="1513" width="15.5" height="15.5" fill="#8dc63f" />
      <rect x={logoX} y="1529" width="15.5" height="15.5" fill="#00aeef" />
      <rect x={logoX + 16} y="1529" width="15.5" height="15.5" fill="#ffc20e" />
      <text x={logoX + 39} y="1539" textLength="159" lengthAdjust="spacingAndGlyphs" fontSize="28" fill="#757577" stroke="#757577" strokeWidth="1.1" className="font-['Open_Sans',sans-serif] font-semibold">
        Microsoft Bing
      </text>
      <g fontSize="29.5" stroke="#f4f4f4" strokeWidth="3" paintOrder="stroke" className="font-['Liberation_Sans',sans-serif]">
        <text x={copyX} y="1548" textLength={copyW} lengthAdjust="spacingAndGlyphs" fill="#0a0a0a">
          © 2024 TomTom, © 2024 Microsoft Corporation,
        </text>
        <text x={copyX + copyW + 10} y="1548" textLength="228" lengthAdjust="spacingAndGlyphs" fill="#1b3296">
          © OpenStreetMap
        </text>
      </g>
      <rect x={copyX + copyW + 10} y="1551" width="228" height="2.6" fill="#1b3296" />
    </g>
  );
}

const Bubble = ({ b: [cx, cy, fill, stroke, opacity = 1] }) => (
  <circle cx={cx} cy={cy} r="26.5" fill={fill} fillOpacity={opacity} stroke={stroke} strokeWidth="4" />
);

function SplitBubble({ cx, cy, left, right, leftStroke, rightStroke, opacity = 1 }) {
  return (
    <g strokeWidth="4" fillOpacity={opacity}>
      <path d={`M${cx} ${cy - 26.5}A26.5 26.5 0 0 1 ${cx} ${cy + 26.5}Z`} fill={right} stroke={rightStroke} />
      <path d={`M${cx} ${cy - 26.5}A26.5 26.5 0 0 0 ${cx} ${cy + 26.5}Z`} fill={left} stroke={leftStroke} />
    </g>
  );
}

const FACILITY_BUBBLES_A = [
  [405.6, 655.6, "#cf8787", "#7a0a0f"],
  [464.4, 657, "#f9bfa8", "#bf6c47", 0.88],
  [649, 963.5, "#9dbabd", "#12414a"],
  [653, 974, "#8c5a50", "#7a1c0c"],
  [664.6, 998.6, "#8f8990", "#6f6558"],
  [623.6, 982.5, "#6d7176", "#07090c", 0.95],
];
const FACILITY_BUBBLES_B = [
  [764.4, 963.5, "#7f8288", "#05070b"],
  [641.3, 1071, "#95a597", "#2c4475"],
  [795.7, 1067, "#b7c7ad", "#65854f"],
  [759.5, 1046, "#3c4a66", "#23243a"],
  [767, 1048.5, "#4a6892", "#0a1f55"],
  [796, 1103, "#6b5a6b", "#2a2432"],
  [778, 1101, "#a3b02f", "#7a9a12", 0.85],
  [896.7, 1135.4, "#b9c6ea", "#6a83c4"],
  [919.4, 1142.4, "#3c2e5a", "#3a0f36"],
  [911.4, 1141.7, "#3d4470", "#080d33"],
  [907, 1123.5, "#a19e60", "#2c2c20", 0.6],
  [958.5, 1092, "#c08c3c", "#a86413"],
  [960.4, 1087.7, "#cb9b48", "#c77718"],
  [1000, 1118.6, "#b98f7f", "#98481f"],
  [971.4, 1116.5, "#c4848c", "#7e2f4c", 0.85],
  [1034, 1043.5, "#8f6c60", "#3c0a12"],
];
const CAMPSITE_BUBBLES = [
  [2529, 814, "#a04a84", "#c7328c"],
  [2525, 814, "#5f5f68", "#2e2238"],
  [2515, 911.6, "#93696d", "#4a0810"],
  [2638, 890.5, "#629e79", "#c8c81e"],
  [2639.3, 890, "#629e79", "#0e7f20"],
  [2650, 942.5, "#e38b77", "#bf4a20"],
];

const PIE = ["#4ac5a5", "#3b2a24", "#9a7a4e", "#0e1510", "#3f9a4a", "#11181c", "#2f7a4a", "#6a9a5a", "#141414", "#a02a38", "#0b0b12", "#0a0d14", "#2b2b34", "#5a5f9a", "#0b0b12", "#6a7598", "#10101c", "#3a3f8e", "#070712", "#232346", "#8d9a90", "#2a1a36", "#7a9a7a", "#151520", "#5f3f8a", "#0b0b12", "#0c0c16", "#4f3470", "#101014", "#8a5a9a", "#141018", "#6a8a6a", "#1a1a1a", "#9a4f8a", "#0e1a14", "#6aaa8a", "#150f14", "#8a5040"];

function Pie({ cx, cy }) {
  const n = PIE.length;
  const at = (i) => {
    const a = (i / n) * 2 * Math.PI - Math.PI / 2 - 0.08;
    return `${(cx + 28.5 * Math.cos(a)).toFixed(2)} ${(cy + 28.5 * Math.sin(a)).toFixed(2)}`;
  };
  return (
    <g>
      <circle cx={cx} cy={cy} r="28.5" fill="#101014" />
      {PIE.map((c, i) => (
        <path key={i} d={`M${cx} ${cy}L${at(i)}A28.5 28.5 0 0 1 ${at(i + 1)}Z`} fill={c} />
      ))}
      <rect x={cx - 2} y={cy - 28} width="5" height="28" fill="#4ec3a6" />
    </g>
  );
}

function FacilityMap() {
  return (
    <svg viewBox="112 499 1901 1076" className="ml-4 mt-[22px] block h-[1062px] w-[1876px] bg-[#c9c9c9]">
      <WorldLayer x={1718.5} y={1418} />
      <MapLabel x={702} y={855} w={258} size={32}>NORTH AMERICA</MapLabel>
      <MapLabel x={1877} y={892} w={122} size={32}>EUROPE</MapLabel>
      <MapLabel x={1888} y={1367.5} w={112} size={32}>AFRICA</MapLabel>
      <MapLabel x={1140} y={1567.5} w={258} size={32}>SOUTH AMERICA</MapLabel>
      <MapLabel x={128} y={1119} w={210} size={35} color="#868686">Pacific Ocean</MapLabel>
      <MapLabel x={1225.6} y={1140} w={223} size={35} color="#868686">Atlantic Ocean</MapLabel>
      {FACILITY_BUBBLES_A.map((b, i) => <Bubble key={i} b={b} />)}
      <SplitBubble cx={645.6} cy={979} left="#1c2a2c" right="#55404e" leftStroke="#050708" rightStroke="#0d070c" opacity={0.9} />
      {FACILITY_BUBBLES_B.map((b, i) => <Bubble key={i} b={b} />)}
      <SplitBubble cx={1718.7} cy={1419.5} left="#a0aedb" right="#a9b893" leftStroke="#4a62b5" rightStroke="#5b7a40" />
      <MapFooter logoX={128} copyX={1096} copyW={595} />
    </svg>
  );
}

function CampsiteMap() {
  return (
    <svg viewBox="2068 499 1970 1076" className="ml-[15px] mt-[22px] block h-[1062px] w-[1944px] bg-[#c9c9c9]">
      <WorldLayer x={3590.5} y={1259} />
      <MapLabel x={2575} y={695.5} w={188} size={32} className="[font-variant-caps:small-caps]">North America</MapLabel>
      <MapLabel x={3751} y={732.7} w={87} size={32} className="[font-variant-caps:small-caps]">Europe</MapLabel>
      <MapLabel x={3762} y={1206} w={81} size={32} className="[font-variant-caps:small-caps]">Africa</MapLabel>
      <MapLabel x={3014} y={1407} w={186} size={32} className="[font-variant-caps:small-caps]">South America</MapLabel>
      <MapLabel x={3101} y={979.5} w={224} size={35} color="#868686" className="italic">Atlantic Ocean</MapLabel>
      {CAMPSITE_BUBBLES.map((b, i) => <Bubble key={i} b={b} />)}
      <Pie cx={3592} cy={1261} />
      <MapFooter logoX={2084} copyX={3121.6} copyW={594} />
    </svg>
  );
}

/* ---------- Header ---------- */
function Logo() {
  return (
    <svg viewBox="96 75 929 268" className="h-[265px] w-[917px] shrink-0">
      <g fill="#ffffff" stroke="#ffffff" strokeWidth="1.2" fontSize="120" className="font-['Lato',sans-serif] font-light">
        <text x="154" y="257" textLength="66" lengthAdjust="spacingAndGlyphs">R</text>
        <text x="221" y="257" textLength="66" lengthAdjust="spacingAndGlyphs">E</text>
        <text x="287" y="257" textLength="87" lengthAdjust="spacingAndGlyphs">C</text>
        <text x="370" y="257" textLength="66" lengthAdjust="spacingAndGlyphs">R</text>
        <text x="437" y="257" textLength="66" lengthAdjust="spacingAndGlyphs">E</text>
        <text x="580" y="257" textLength="61" lengthAdjust="spacingAndGlyphs">T</text>
        <text x="783" y="257" textLength="88" lengthAdjust="spacingAndGlyphs">N</text>
        <text x="866" y="254" fontSize="60" strokeWidth="0.6" textLength="113" lengthAdjust="spacingAndGlyphs">.gov</text>
      </g>
      <g fill="none" stroke="#5f8a35">
        <path d="M511.5 257L551 178L591 257" strokeWidth="7" />
        <path d="M664.6 257V172" strokeWidth="8" />
        <path d="M650.5 188L664.6 172L679 188M650.5 209L664.6 193L679 209M650.5 232L664.6 215L679 232" strokeWidth="6" />
      </g>
      <path d="M664.6 164L672 178H657Z" fill="#5f8a35" />
      <g fill="none" stroke="#ffffff" strokeWidth="6.5">
        <path d="M741 171.5A40 41 0 0 1 774.5 207M774.5 219.5A40 41 0 0 1 741 255M729 255A40 41 0 0 1 695.5 219.5M695.5 207A40 41 0 0 1 729 171.5" />
      </g>
      <path fillRule="evenodd" fill="#5f8a35" d="M754 194.5L744.5 213A10 10 0 0 1 734 223L716 233L725.5 214A10 10 0 0 1 736 203.5ZM735 209A4.3 4.3 0 1 0 735 217.6A4.3 4.3 0 1 0 735 209Z" />
    </svg>
  );
}

function FilterCard({ title, width, inner }) {
  return (
    <section className={"h-[204px] shrink-0 bg-white " + width}>
      <div className={"flex flex-col " + inner}>
        <div className="flex h-[71px] items-start justify-between pl-[10px] pr-[10px]">
          <h2 className="text-[40px] font-bold leading-[56px] tracking-[-1.2px] text-[#507225]">{title}</h2>
          <svg viewBox="0 0 30 16" className="mt-[14px] h-[16px] w-[30px]">
            <path d="M1 1L15 14.5L29 1" fill="none" stroke="#4f4f4f" strokeWidth="2.6" />
          </svg>
        </div>
        <div className="mt-[1px] flex h-[75px] items-center justify-between border-[3px] border-[#e6e6e6] pl-[16px] pr-[16px]">
          <span className="text-[37px] leading-[48px] text-[#595959]">All</span>
          <svg viewBox="0 0 36 20" className="mt-[4px] h-[20px] w-[36px]">
            <path d="M1 1L18 18.5L35 1" fill="none" stroke="#4f4f4f" strokeWidth="2.6" />
          </svg>
        </div>
      </div>
    </section>
  );
}

/* ---------- Legends ---------- */
function Legend({ title, titleWidth, items, className }) {
  return (
    <div className={"mt-[36px] flex h-[44px] items-start pr-6 text-[36px] leading-[44px] text-[#5a5a58] " + className}>
      <span className={"shrink-0 whitespace-nowrap font-bold " + titleWidth}>{title}</span>
      {items.map(([name, dot, width]) => (
        <span key={name} className={"flex shrink-0 gap-[4px] whitespace-nowrap " + width}>
          <i className={"mt-[10px] h-[31px] w-[31px] shrink-0 rounded-full " + dot} />
          {name}
        </span>
      ))}
      <svg viewBox="0 0 15 28" className="ml-auto mt-[9px] h-[28px] w-[15px] shrink-0">
        <path d="M0 0L15 14L0 28Z" fill="#252525" />
      </svg>
    </div>
  );
}

const FACILITIES = [
  ["Acadian C...", "bg-[#ebebeb]", "w-[244px]"],
  ["Barataria ...", "bg-[#4a4a4a]", "w-[244px]"],
  ["Bear Gulc...", "bg-[#aab3a2]", "w-[241px]"],
  ["Bobcat Trail...", "bg-[#688b3c]", "w-[280px]"],
  ["Capulin Vol...", "bg-[#9caf86]", "w-[265px]"],
  ["Chalmett...", "bg-[#717171]", "w-[230px]"],
];
const CAMPSITES = [
  ["001", "bg-[#ebebeb]"], ["002", "bg-[#4a4a4a]"], ["003", "bg-[#aab3a2]"], ["004", "bg-[#688b3c]"], ["005", "bg-[#9caf86]"],
  ["006", "bg-[#717171]"], ["007", "bg-[#88a06c]"], ["008", "bg-[#55732a]"], ["009", "bg-[#3597b9]"], ["010", "bg-[#dfbfbf]"],
  ["011", "bg-[#4ac5bb]"], ["012", "bg-[#5f6b6d]"], ["013", "bg-[#fb8281]"], ["014", "bg-[#f4d25a]"],
].map(([n, c]) => [n, c, "w-[112px]"]);

/* ---------- Tables ---------- */
const FACILITY_ROWS = [
  {
    h: "h-[188px]",
    name: ["Acadian Cultural", "Center"],
    phone: "(337) 232-0789",
    lines: [
      "The Acadian Cultural Center is located south of Interstate 10",
      "in Lafayette, near the airport and just east of the",
      "intersection of Surrey Street and Evangeline",
      "Throughway/Highway 90.",
    ],
  },
  {
    h: "h-[275px]",
    name: ["Barataria Preserve"],
    phone: "(504) 689-3690",
    lines: [
      "The Barataria Preserve is located 17 miles south of New",
      "Orleans on the west bank of the Mississippi River; Barataria",
      "Blvd./Highway 45 runs through the preserve. Note that not all",
      "GPS systems find the preserve successfully, so double check",
      "your GPS against a map. The Visitor Center is located just off",
      "of Highway 45.",
    ],
  },
  {
    h: "h-[105px]",
    name: ["Bear Gulch Nature", "Center"],
    phone: "(831) 389-4486",
    lines: ["Located on the east side of the park at the Bear Gulch Day", "Use Area."],
  },
];

const Lines = ({ text }) => (
  <div>
    {text.map((t) => (
      <p key={t} className="whitespace-nowrap">{t}</p>
    ))}
  </div>
);

function FacilityTable() {
  return (
    <section className="flex h-[686px] w-[1908px] items-start bg-white pl-[19px] pt-[15px] text-[36px] leading-[43.1px] text-[#0c142c]">
      <div className="w-[1833px]">
        <div className="grid h-[87px] grid-cols-[422px_345px_1fr] border-b-[3px] border-[#0c1a26] bg-[#57732a] pl-[15px] pt-[9px] text-white">
          <div>
            <p>Facility Name</p>
            <svg viewBox="0 0 25 13" className="mt-[5px] h-[13px] w-[25px]">
              <path d="M0 13L12.5 0L25 13Z" fill="#ffffff" />
            </svg>
          </div>
          <p>Phone</p>
          <p>Directions</p>
        </div>
        {FACILITY_ROWS.map((r) => (
          <div key={r.phone} className={"grid grid-cols-[422px_345px_1fr] border-b-[3px] border-[#e0e0e0] pl-[15px] pt-[8px] " + r.h}>
            <div className="tracking-[-0.3px]">
              <Lines text={r.name} />
            </div>
            <p className="tracking-[-0.2px]">{r.phone}</p>
            <Lines text={r.lines} />
          </div>
        ))}
      </div>
      <div className="ml-[16px] mt-[4px] h-[24px] w-[21px] rounded-full bg-[#b0b0b0]" />
    </section>
  );
}

const CAMPSITE_ROWS = [
  ["001", "GROUP STANDARD NONELECTRIC", "True", "false"],
  ["001", "RV NONELECTRIC", "False", "false"],
  ["001", "STANDARD NONELECTRIC", "False", "false"],
  ["002", "MANAGEMENT", "False", "false"],
  ["002", "RV NONELECTRIC", "False", "false"],
  ["002", "STANDARD NONELECTRIC", "False", "false"],
  ["003", "RV NONELECTRIC", "False", "false"],
  ["003", "STANDARD NONELECTRIC", "False", "false"],
  ["004", "RV NONELECTRIC", "False", "true"],
];

function CampsiteTable() {
  return (
    <section className="flex h-[686px] w-[1973px] items-start bg-white pl-[18px] pt-[15px] text-[36px] leading-[43.1px] tracking-[-0.5px] text-[#0c142c]">
      <div className="h-[664px] w-[1898px] overflow-hidden">
        <div className="grid h-[87px] grid-cols-[457px_771px_226px_218px_1fr] whitespace-nowrap border-b-[3px] border-[#0c1a26] bg-[#57732a] pl-[16px] pt-[9px] text-white">
          <p>Campsite Name</p>
          <p>Type</p>
          <p>Reservable?</p>
          <p>Accessible?</p>
          <p>Type of Use</p>
        </div>
        {CAMPSITE_ROWS.map((r, i) => (
          <div key={i} className="grid h-[64.75px] grid-cols-[457px_771px_226px_218px_1fr] whitespace-nowrap border-b-[3px] border-[#e0e0e0] pl-[16px] pt-[8px]">
            <p>{r[0]}</p>
            <p className="tracking-[-1.2px]">{r[1]}</p>
            <p>{r[2]}</p>
            <p>{r[3]}</p>
            <p>Overnight</p>
          </div>
        ))}
      </div>
      <div className="ml-[16px] mt-[4px] h-[31px] w-[21px] rounded-full bg-[#b0b0b0]" />
    </section>
  );
}

export default function App() {
  return (
    <main className="h-[2369px] w-[4096px] overflow-hidden bg-white pl-[74px] pt-[73px] font-['Open_Sans',sans-serif]">
      <div className="h-[2222px] w-[3949px] bg-[#cccccc] pl-[21px]">
        <header className="flex h-[266px] items-start">
          <Logo />
          <div className="flex items-start pt-[35px]">
            <FilterCard title="Facility Name" width="mr-[23px] w-[991px]" inner="pl-[30px] pr-[33px] pt-[14px]" />
            <FilterCard title="Campsite Name" width="mr-[19px] w-[986px]" inner="pl-[30px] pr-[33px] pt-[14px]" />
            <FilterCard title="Activity" width="-mt-[3px] w-[970px]" inner="pl-[32px] pr-[32px] pt-[14px]" />
          </div>
        </header>
        <div className="flex gap-[23px]">
          <section className="h-[1231px] w-[1908px] bg-white">
            <h2 className="text-center text-[45px] font-bold leading-[52px] tracking-[-1.2px] text-[#507225]">Facility Locations</h2>
            <Legend title="Facility Name" titleWidth="w-[261px] tracking-[-0.8px]" items={FACILITIES} className="pl-[16px] tracking-[-0.1px]" />
            <FacilityMap />
          </section>
          <section className="h-[1231px] w-[1975px] bg-white">
            <h2 className="text-center text-[45px] font-bold leading-[52px] tracking-[-1.7px] text-[#507225]">Campsite Locations</h2>
            <Legend title="Campsite Name" titleWidth="w-[293px] tracking-[-1.5px]" items={CAMPSITES} className="pl-[15px] tracking-[-1px]" />
            <CampsiteMap />
          </section>
        </div>
        <div className="mt-[18px] flex gap-[23px]">
          <FacilityTable />
          <CampsiteTable />
        </div>
      </div>
    </main>
  );
}
